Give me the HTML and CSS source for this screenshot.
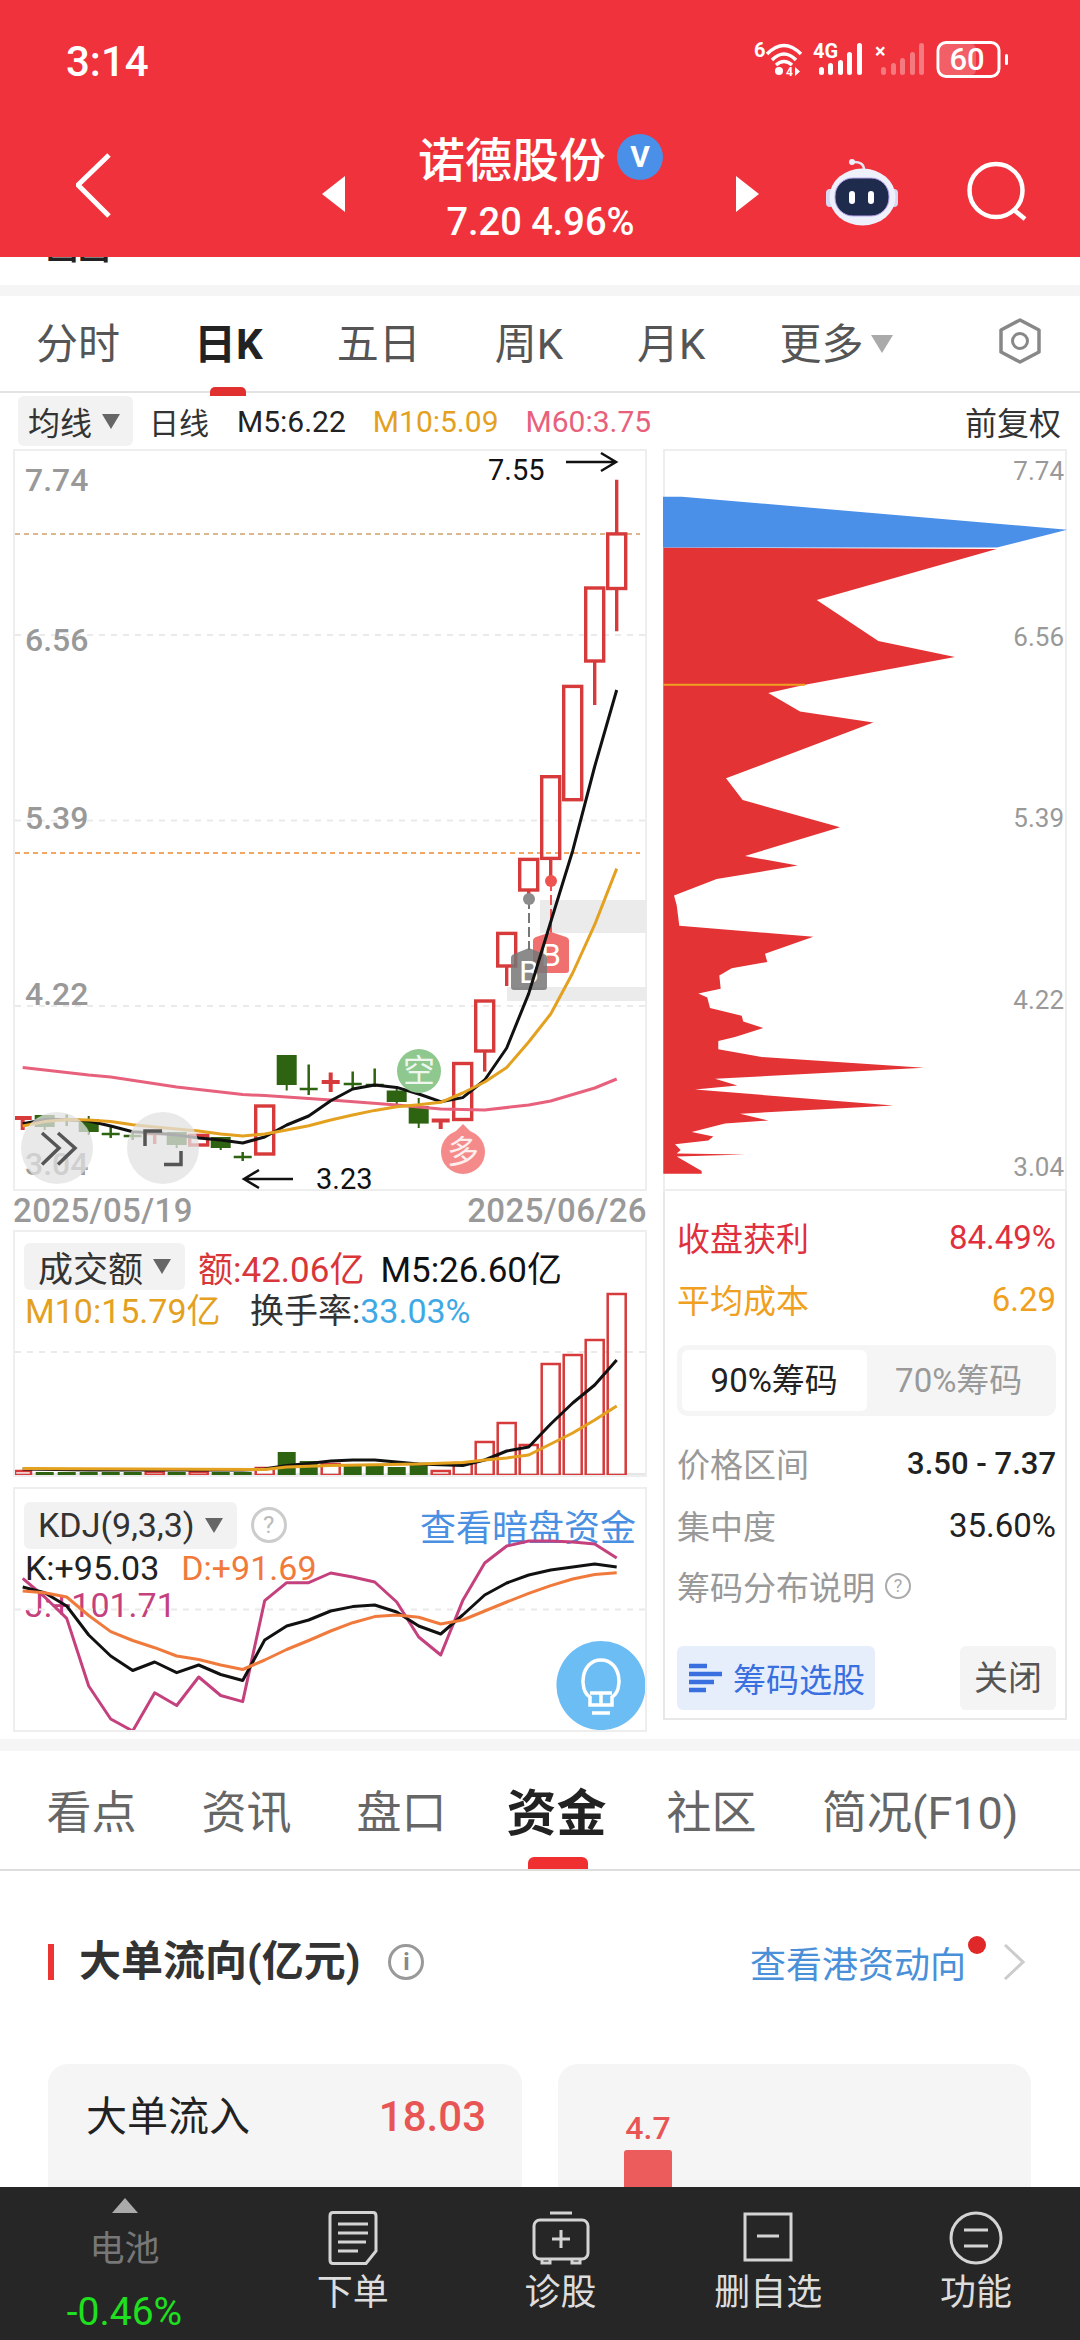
FILE: index.html
```html
<!DOCTYPE html>
<html lang="zh-CN">
<head>
  <meta charset="UTF-8">
  <title>诺德股份</title>
  <link rel="stylesheet" href="styles.css">
</head>
<body>
  <header class="header">
    <div class="status">
      <span class="time">3:14</span>
      <svg class="status-icons" width="262" height="76" viewBox="750 21 262 76">
        <text class="st-small" x="754" y="57">6</text>
        <g class="st-line">
          <path d="M767 54Q784 37 801 54"/>
          <path d="M772 60Q784 48 796 60"/>
          <path d="M776 65Q784 58 792 65"/>
        </g>
        <circle cx="779" cy="71" r="4" fill="#fff"/>
        <text class="st-tiny" x="786" y="76">4</text>
        <path d="M795 67V76L800 71.500Z" fill="#fff"/>
        <text class="st-small" x="813" y="58">4G</text>
        <g fill="#fff">
          <rect x="819" y="67" width="5" height="8" rx="2.500"/>
          <rect x="828" y="63" width="5" height="12" rx="2.500"/>
          <rect x="838" y="60" width="5" height="15" rx="2.500"/>
          <rect x="847" y="52" width="5" height="23" rx="2.500"/>
          <rect x="857" y="43" width="5" height="32" rx="2.500"/>
        </g>
        <text class="st-small" x="875" y="58">×</text>
        <g fill="#fff" opacity="0.35">
          <rect x="881" y="67" width="5" height="8" rx="2.500"/>
          <rect x="891" y="63" width="5" height="12" rx="2.500"/>
          <rect x="900" y="58" width="5" height="17" rx="2.500"/>
          <rect x="910" y="52" width="5" height="23" rx="2.500"/>
          <rect x="919" y="43" width="5" height="32" rx="2.500"/>
        </g>
        <rect x="940" y="44" width="36" height="31" rx="5" fill="#fff" opacity="0.22"/>
        <rect x="938" y="42.500" width="61" height="34" rx="8" fill="none" stroke="#fff" stroke-width="3"/>
        <text class="st-batt" x="967" y="70">60</text>
        <rect x="1005" y="54" width="3" height="11" rx="1.500" fill="#fff"/>
      </svg>
    </div>
    <div class="title-row">
      <svg class="back" width="36" height="66" viewBox="0 0 36 66">
        <path d="M33 2 2 32l31 31" fill="none" stroke="#fff" stroke-width="5"/>
      </svg>
      <span class="tri tri-left"></span>
      <div class="stock">
        <div class="stock-name">诺德股份<span class="badge-v">V</span></div>
        <div class="stock-price">7.20 4.96%</div>
      </div>
      <span class="tri tri-right"></span>
      <svg class="robot" width="72" height="68" viewBox="0 0 72 68">
        <path d="M26 3Q38 2 38 11" fill="none" stroke="#e8e8f4" stroke-width="2.500"/>
        <circle cx="26" cy="3" r="3" fill="#eef0fb"/>
        <rect x="0" y="30" width="8" height="18" rx="4" fill="#d5daf2"/>
        <rect x="64" y="30" width="8" height="18" rx="4" fill="#d5daf2"/>
        <ellipse cx="36.500" cy="38" rx="33" ry="28.500" fill="#eef0fb"/>
        <rect x="9" y="19" width="54" height="38" rx="18" fill="#1f2b4d" stroke="#b9a6ee" stroke-width="1"/>
        <rect x="23" y="32" width="6" height="13" rx="3" fill="#fff"/>
        <rect x="42" y="32" width="6" height="13" rx="3" fill="#fff"/>
      </svg>
      <svg class="search" width="62" height="60" viewBox="0 0 62 60">
        <circle cx="30" cy="29.500" r="26.500" fill="none" stroke="#fff" stroke-width="4.500"/>
        <path d="M48 49 59 58" stroke="#fff" stroke-width="4.500"/>
      </svg>
    </div>
  </header>

  <main class="content">
    <div class="sliver"><span>画画</span></div>

    <section class="kline">
      <nav class="period-tabs">
        <span>分时</span>
        <span class="active">日K</span>
        <span>五日</span>
        <span>周K</span>
        <span>月K</span>
        <span>更多<i class="caret caret-lg"></i></span>
        <svg class="hex" width="48" height="46" viewBox="0 0 48 46">
          <path d="M24 2 43 12V34L24 44 5 34V12Z" fill="none" stroke="#888" stroke-width="3.500" stroke-linejoin="round"/>
          <circle cx="24" cy="23" r="7.500" fill="none" stroke="#888" stroke-width="3"/>
        </svg>
      </nav>

      <div class="ma-row">
        <span class="chip">均线<i class="caret"></i></span>
        <span class="ma-name">日线</span>
        <span class="ma-val">M5:6.22</span>
        <span class="ma-val c-orange">M10:5.09</span>
        <span class="ma-val c-pink">M60:3.75</span>
        <span class="ma-right">前复权</span>
      </div>

      <div class="chart-grid">
        <div class="col">
          <div class="panel panel-main">
            <svg class="chart chart-open" width="630" height="738" viewBox="15 451 630 738">
              <rect class="band" x="540" y="900" width="107" height="33"/>
              <rect class="band" x="507" y="987" width="140" height="14"/>
              <path class="grid" d="M15 635H645M15 820.600H645M15 1006H645"/>
              <path class="dash-tan" d="M15 534H640"/>
              <path class="dash-orange" d="M15 853H640"/>

              <text class="axis" x="25" y="491">7.74</text>
              <text class="axis" x="25" y="651">6.56</text>
              <text class="axis" x="25" y="829">5.39</text>
              <text class="axis" x="25" y="1005">4.22</text>
              <text class="axis" x="25" y="1175">3.04</text>

              <g class="up">
                <rect x="607.700" y="533.900" width="18" height="54.600"/>
                <path d="M616.700 479.800V533.900M616.700 588.500V631.300"/>
                <rect x="585.700" y="588" width="18" height="73"/>
                <path d="M594.700 661V705"/>
                <rect x="563.700" y="686.400" width="18" height="113.300"/>
                <rect x="541.700" y="776.700" width="18" height="81.700"/>
                <path d="M550.700 858.400V881"/>
                <rect x="519.700" y="859.400" width="18" height="30.600"/>
                <path d="M528.700 890V899"/>
                <rect x="497.700" y="933.400" width="18" height="32.600"/>
                <path d="M506.700 966V986"/>
                <rect x="475.700" y="1001" width="18" height="50"/>
                <path d="M484.700 1051V1071.600"/>
                <rect x="453.700" y="1063.500" width="18" height="56"/>
                <rect x="255.700" y="1106" width="18" height="48"/>
                <rect x="189.700" y="1135.400" width="18" height="9.600"/>
                <path d="M431.700 1120.500H449.700M440.700 1120V1129" stroke-width="4"/>
                <path d="M321.700 1082H339.700M330.700 1072.600V1092" stroke-width="4"/>
                <path d="M145.700 1133.500H163.700M154.700 1131V1144"/>
                <path d="M15 1118H31.700M22.700 1118V1130" stroke-width="4"/>
              </g>
              <g class="dn">
                <path d="M418.700 1098V1128M396.700 1086V1106M286.700 1056V1090.500M220.700 1138V1150M176.700 1133V1148M88.700 1116V1135M44.700 1116V1130"/>
                <rect x="409.700" y="1107" width="18" height="15.600"/>
                <rect x="387.700" y="1091.500" width="18" height="9.500"/>
                <rect x="277.700" y="1056" width="18" height="28"/>
                <rect x="211.700" y="1138" width="18" height="9"/>
                <rect x="167.700" y="1133" width="18" height="11"/>
                <rect x="79.700" y="1120" width="18" height="11"/>
                <rect x="35.700" y="1116" width="18" height="10"/>
              </g>
              <path class="dn-thin" d="M365.700 1085H383.700M374.700 1068.600V1087M343.700 1084H361.700M352.700 1071.600V1089M299.700 1089H317.700M308.700 1064.500V1095M233.700 1157H251.700M242.700 1152V1161M123.700 1136H141.700M132.700 1132V1140M101.700 1134H119.700M110.700 1126V1138M57.700 1120H75.700M66.700 1114.500V1126"/>

              <path class="tag-line-gray" d="M529 899V950"/>
              <path class="tag-line-red" d="M551 881V934"/>
              <circle cx="529" cy="899" r="6" fill="#8c8c8c"/>
              <circle cx="551" cy="881" r="6" fill="#ef5350"/>
              <path class="tag-red" d="M536 937 551 932 566 937Q569 938 569 941V970Q569 973 566 973H536Q533 973 533 970V941Q533 938 536 937Z"/>
              <text class="tag-text" x="551" y="966">B</text>
              <path class="tag-gray" d="M514 954 529 948 544 954Q547 955 547 958V987Q547 990 544 990H514Q511 990 511 987V958Q511 955 514 954Z"/>
              <text class="tag-text" x="529" y="983">B</text>

              <polyline class="ln-pink" points="22.700,1067.500 88.700,1075 110.700,1077 176.700,1087 242.700,1094.600 264.700,1095.600 330.700,1100 396.700,1105 440.700,1109 484.700,1110 528.700,1105 550.700,1101 594.700,1088 616.700,1079"/>
              <polyline class="ln-black" points="22.700,1123.700 44.700,1119.600 66.700,1119.600 88.700,1121 110.700,1126 132.700,1131.800 154.700,1132.900 176.700,1134.900 198.700,1138 220.700,1140 242.700,1143 264.700,1137 286.700,1125 308.700,1116 330.700,1100.700 352.700,1089 374.700,1085 396.700,1087.400 418.700,1094 440.700,1101.700 462.700,1097.600 484.700,1080 506.700,1048 528.700,993.600 550.700,922 572.700,850.700 594.700,766.500 616.700,690"/>
              <polyline class="ln-orange" points="22.700,1126 44.700,1121.600 66.700,1119.600 88.700,1120 110.700,1121.600 132.700,1124.700 154.700,1127 176.700,1129 198.700,1131 220.700,1134 242.700,1136 264.700,1134 286.700,1130 308.700,1125.700 330.700,1120 352.700,1115 374.700,1110.400 396.700,1106.800 418.700,1104.800 440.700,1102.300 462.700,1093 484.700,1082 506.700,1067.500 528.700,1042 550.700,1014 572.700,973 594.700,924.700 616.700,868.600"/>

              <circle cx="419" cy="1071" r="22" fill="#8ec88e"/>
              <text class="mark-text" x="419" y="1082">空</text>
              <circle cx="463" cy="1152" r="22" fill="#f48a8a"/>
              <path d="M455 1132 463 1124 471 1132Z" fill="#f48a8a"/>
              <text class="mark-text" x="463" y="1163">多</text>

              <text class="note" x="488" y="480">7.55</text>
              <path class="arrow" d="M566 462H616M601 453 616 462 601 471"/>
              <text class="note" x="316" y="1189">3.23</text>
              <path class="arrow" d="M293 1179H244M259 1170 244 1179 259 1188"/>

              <circle class="float-btn" cx="57" cy="1148" r="36"/>
              <circle class="float-btn" cx="163" cy="1148" r="36"/>
              <path class="float-icon" d="M42 1133 59 1148 42 1164.500M58 1133 75 1148 58 1164.500"/>
              <path class="float-icon" d="M145 1146V1131H162M181 1151V1164.500H164"/>
            </svg>
          </div>

          <div class="dates"><span>2025/05/19</span><span>2025/06/26</span></div>

          <div class="panel panel-vol">
            <div class="panel-head">
              <span class="chip chip-lg">成交额<i class="caret"></i></span>
              <span class="c-red vol-a">额:42.06亿</span>
              <span class="vol-b">M5:26.60亿</span>
            </div>
            <div class="panel-line">
              <span class="c-orange">M10:15.79亿</span>
              <span class="turn">换手率:<span class="c-sky">33.03%</span></span>
            </div>
            <svg class="chart" width="630" height="243" viewBox="15 1232 630 243">
              <path class="grid" d="M15 1352H645"/>
              <path class="base" d="M15 1474H645"/>
              <g class="bar-up">
                <rect x="607.700" y="1294" width="18" height="181"/>
                <rect x="585.700" y="1340" width="18" height="135"/>
                <rect x="563.700" y="1355" width="18" height="120"/>
                <rect x="541.700" y="1364" width="18" height="111"/>
                <rect x="519.700" y="1445" width="18" height="30"/>
                <rect x="497.700" y="1423" width="18" height="52"/>
                <rect x="475.700" y="1442" width="18" height="33"/>
                <rect x="453.700" y="1463" width="18" height="12"/>
                <rect x="431.700" y="1471" width="18" height="4"/>
                <rect x="321.700" y="1464" width="18" height="11"/>
                <rect x="255.700" y="1468" width="18" height="7"/>
                <rect x="189.700" y="1472" width="18" height="3"/>
                <rect x="145.700" y="1472" width="18" height="3"/>
                <rect x="15" y="1471" width="16" height="4"/>
              </g>
              <g class="bar-dn">
                <rect x="409.700" y="1465" width="18" height="10"/>
                <rect x="387.700" y="1467" width="18" height="8"/>
                <rect x="365.700" y="1465.600" width="18" height="9.400"/>
                <rect x="343.700" y="1465.600" width="18" height="9.400"/>
                <rect x="299.700" y="1461" width="18" height="14"/>
                <rect x="277.700" y="1452" width="18" height="23"/>
                <rect x="233.700" y="1472" width="18" height="3"/>
                <rect x="211.700" y="1472" width="18" height="3"/>
                <rect x="167.700" y="1472" width="18" height="3"/>
                <rect x="123.700" y="1472" width="18" height="3"/>
                <rect x="101.700" y="1472" width="18" height="3"/>
                <rect x="79.700" y="1472" width="18" height="3"/>
                <rect x="57.700" y="1472" width="18" height="3"/>
                <rect x="35.700" y="1472" width="18" height="3"/>
              </g>
              <polyline class="ln-black" points="22.700,1469 88.700,1470 176.700,1470 242.700,1470 264.700,1469 286.700,1465.600 308.700,1463.500 330.700,1461 352.700,1460 374.700,1460 396.700,1462 418.700,1464 462.700,1465.600 484.700,1460 506.700,1451 528.700,1447 550.700,1424 572.700,1403 594.700,1385 616.700,1360"/>
              <polyline class="ln-orange" points="22.700,1468.500 264.700,1469.500 286.700,1467 330.700,1465.600 418.700,1464 462.700,1462.400 484.700,1460 506.700,1458 528.700,1455 550.700,1444 572.700,1433 594.700,1420 616.700,1406"/>
            </svg>
          </div>

          <div class="panel panel-kdj">
            <div class="panel-head">
              <span class="chip chip-lg">KDJ(9,3,3)<i class="caret"></i></span>
              <span class="help help-lg">?</span>
              <span class="kdj-link">查看暗盘资金</span>
            </div>
            <div class="kdj-line kdj-line-k"><span>K:+95.03</span><span class="c-coral">D:+91.69</span></div>
            <div class="kdj-line kdj-line-j">J:+101.71</div>
            <svg class="chart" width="630" height="241" viewBox="15 1489 630 241">
              <path class="grid" d="M15 1609.500H645"/>
              <polyline class="ln-magenta" points="22.700,1578.400 44.700,1597 66.700,1618.400 88.700,1686 110.700,1719 132.700,1731 154.700,1692.700 176.700,1705.500 198.700,1677 220.700,1695.500 242.700,1701.600 264.700,1600.600 286.700,1582.700 308.700,1582.700 330.700,1573 352.700,1577 374.700,1582 396.700,1602 418.700,1637 440.700,1655 462.700,1600.600 484.700,1563 506.700,1546 528.700,1541 550.700,1541 572.700,1542 594.700,1544 616.700,1558"/>
              <polyline class="ln-black" points="22.700,1587 44.700,1592.700 66.700,1606 88.700,1635 110.700,1656 132.700,1670.500 154.700,1662 176.700,1672.700 198.700,1665 220.700,1674.500 242.700,1680.500 264.700,1640 286.700,1626 308.700,1620 330.700,1611 352.700,1606.600 374.700,1605 396.700,1612 418.700,1626 440.700,1634 462.700,1615 484.700,1595 506.700,1583 528.700,1575 550.700,1570 572.700,1567 594.700,1564 616.700,1567"/>
              <polyline class="ln-coral" points="22.700,1591 44.700,1592.700 66.700,1597 88.700,1615.500 110.700,1631.600 132.700,1640.500 154.700,1647.700 176.700,1656 198.700,1659.500 220.700,1665 242.700,1669.500 264.700,1660 286.700,1649.500 308.700,1640.500 330.700,1631 352.700,1622.700 374.700,1616.600 396.700,1615 418.700,1617.300 440.700,1624 462.700,1620 484.700,1611 506.700,1602 528.700,1593.400 550.700,1585.600 572.700,1579 594.700,1574.500 616.700,1572.700"/>
              <circle cx="601" cy="1685.500" r="44.600" fill="#6dbdf5"/>
              <path class="bulb" d="M590 1705V1697C578 1690 581 1660 601 1660C621 1660 624 1690 612 1697V1705ZM590 1693H612M601 1693V1705M592 1713H610"/>
            </svg>
          </div>
        </div>

        <div class="col">
          <div class="panel panel-main">
            <svg class="chart chart-open" width="400" height="738" viewBox="665 451 400 738">
              <polygon class="chip-red" points="663.300,547.600 996.700,549 816.700,600 878.300,641 955,657 805,684.800 768.300,693 800,711.400 873.300,722.600 726,778.300 742.700,800 840,827.300 745,855.900 797.700,865.600 716.700,879 674,895.600 676.700,905.300 679.300,925.700 813.300,936.800 765,953.800 767.300,962 731.700,968.300 719.300,975.600 720.700,988.700 698.300,993.500 707.300,997.400 710,1008 741.700,1015.800 743.300,1021.600 763.300,1028 735,1037 718.300,1041 718.300,1049.300 761.700,1057 924,1067.700 715,1078.800 737.300,1085.600 695,1089.500 893.300,1105.500 740,1113.700 768.300,1120.500 725,1123.400 691.700,1132 713.300,1136.500 708.300,1140.400 675,1144.300 680.700,1150 676.700,1153.500 745,1154.400 676.700,1156.400 701.700,1171 701.700,1173.800 663.300,1173.800"/>
              <polygon class="chip-blue" points="663,496.700 682,496.700 1067,529.700 997,547.600 663,547.600"/>
              <path class="avg-line" d="M663 684.800H805"/>
              <text class="axis-r" x="1064" y="480">7.74</text>
              <text class="axis-r" x="1064" y="646">6.56</text>
              <text class="axis-r" x="1064" y="827">5.39</text>
              <text class="axis-r" x="1064" y="1009">4.22</text>
              <text class="axis-r" x="1064" y="1176">3.04</text>
            </svg>
          </div>

          <div class="stats">
            <div class="stat c-rose"><span>收盘获利</span><span>84.49%</span></div>
            <div class="stat c-amber"><span>平均成本</span><span>6.29</span></div>
            <div class="seg">
              <span class="seg-on">90%筹码</span>
              <span class="seg-off">70%筹码</span>
            </div>
            <div class="stat stat-first"><span class="muted">价格区间</span><span class="strong">3.50 - 7.37</span></div>
            <div class="stat"><span class="muted">集中度</span><span>35.60%</span></div>
            <div class="stat stat-left"><span class="muted">筹码分布说明</span><span class="help">?</span></div>
            <div class="stat-btns">
              <span class="btn-pick">
                <svg width="34" height="30" viewBox="0 0 34 30"><path d="M0 3H18M0 11H33M0 19H25M0 27H17" stroke="#3a6fe0" stroke-width="4.500"/></svg>
                筹码选股
              </span>
              <span class="btn-close">关闭</span>
            </div>
          </div>
        </div>
      </div>
    </section>

    <section class="detail">
      <nav class="detail-tabs">
        <span>看点</span>
        <span>资讯</span>
        <span>盘口</span>
        <span class="active">资金</span>
        <span>社区</span>
        <span class="tab-last">简况(F10)</span>
      </nav>
      <div class="flow-head">
        <h3 class="flow-title">大单流向(亿元)</h3>
        <span class="info">i</span>
        <a class="flow-link">查看港资动向<i class="red-dot"></i></a>
        <svg class="chev" width="22" height="36" viewBox="0 0 22 36"><path d="M2 1 20 18 2 35" fill="none" stroke="#ccc" stroke-width="3"/></svg>
      </div>
      <div class="flow-cards">
        <div class="flow-card flow-card-row"><span>大单流入</span><span class="flow-num">18.03</span></div>
        <div class="flow-card">
          <div class="bar-col"><span class="bar-num">4.7</span><div class="bar-red"></div></div>
        </div>
      </div>
    </section>
  </main>

  <footer class="bottom">
    <div class="bottom-item bottom-first">
      <i class="bottom-tri"></i>
      <span class="bottom-name">电池</span>
      <span class="bottom-pct">-0.46%</span>
    </div>
    <div class="bottom-item">
      <svg class="ico" width="50" height="54" viewBox="0 0 50 54">
        <path d="M5 1.500H45Q48 1.500 48 5V40L38 52.500H5Q2 52.500 2 49V5Q2 1.500 5 1.500Z"/>
        <path d="M10 13H40M10 22H40M10 31H38M10 40H30"/>
      </svg>
      <span>下单</span>
    </div>
    <div class="bottom-item">
      <svg class="ico" width="58" height="54" viewBox="0 0 58 54">
        <path d="M18 2H40"/>
        <rect x="2" y="9" width="54" height="39" rx="6"/>
        <path d="M29 19V37M20 28H38M10 48V52H18V48M40 48V52H48V48"/>
      </svg>
      <span>诊股</span>
    </div>
    <div class="bottom-item">
      <svg class="ico" width="50" height="54" viewBox="0 0 50 54">
        <rect x="2" y="3" width="46" height="46"/>
        <path d="M14 25H36"/>
      </svg>
      <span>删自选</span>
    </div>
    <div class="bottom-item">
      <svg class="ico" width="54" height="54" viewBox="0 0 54 54">
        <circle cx="27" cy="27" r="25"/>
        <path d="M15 19H39M15 35H39"/>
      </svg>
      <span>功能</span>
    </div>
  </footer>
</body>
</html>
```

FILE: styles.css
```css
* {
  box-sizing: border-box;
}
html, body {
  margin: 0;
  padding: 0;
}
body {
  width: 1080px;
  height: 2340px;
  display: flex;
  flex-direction: column;
  overflow: hidden;
  background: #fff;
  color: #222;
  font-family: Roboto, "Noto Sans CJK SC", sans-serif;
}
i {
  font-style: normal;
}

/* colours used by several texts */
.c-orange { color: #e3a11f; }
.c-pink { color: #e8617c; }
.c-red { color: #d9363a; }
.c-sky { color: #3fa9e6; }
.c-coral { color: #f07a3c; }
.c-rose { color: #e0303e; }
.c-amber { color: #f0a020; }

/* red header */
.header {
  height: 257px;
  flex: none;
  background: #f0323c;
  color: #fff;
}
.status {
  height: 122px;
  padding: 0 68px 0 66px;
  display: flex;
  align-items: center;
  justify-content: space-between;
}
.status-icons {
  margin-top: -4px;
}
.time {
  font-size: 42px;
  font-weight: 500;
}
.st-small {
  font-size: 20px;
  font-weight: 700;
  fill: #fff;
}
.st-tiny {
  font-size: 12px;
  font-weight: 700;
  fill: #fff;
}
.st-batt {
  font-size: 31px;
  font-weight: 500;
  fill: #fff;
  text-anchor: middle;
}
.st-line path {
  fill: none;
  stroke: #fff;
  stroke-width: 3.500;
}
.title-row {
  height: 135px;
  padding-left: 76px;
  display: flex;
  align-items: center;
}
.back {
  margin-right: 210px;
  margin-top: -8px;
}
.tri {
  width: 0;
  height: 0;
  border-top: 18px solid transparent;
  border-bottom: 18px solid transparent;
  margin-top: 8px;
}
.tri-left {
  border-right: 23px solid #fff;
}
.tri-right {
  border-left: 23px solid #fff;
}
.stock {
  width: 391px;
  margin-bottom: 6px;
  text-align: center;
}
.stock-name {
  display: flex;
  align-items: center;
  justify-content: center;
  gap: 11px;
  height: 60px;
  margin-bottom: 10px;
  font-size: 47px;
  font-weight: 500;
}
.badge-v {
  width: 46px;
  height: 46px;
  border-radius: 50%;
  background: #4a90e8;
  font-size: 30px;
  font-weight: 700;
  line-height: 46px;
}
.stock-price {
  height: 50px;
  line-height: 50px;
  font-size: 38px;
  font-weight: 500;
}
.robot {
  margin-left: 67px;
  margin-top: 6px;
}
.search {
  margin-left: 68px;
  margin-top: 2px;
}

/* scrolling area */
.content {
  flex: 1;
  min-height: 0;
  overflow: hidden;
}
.sliver {
  height: 39px;
  border-bottom: 11px solid #f5f5f5;
  padding-left: 46px;
  overflow: hidden;
}
.sliver span {
  display: block;
  margin-top: -30px;
  height: 42px;
  line-height: 42px;
  font-size: 32px;
  font-weight: 700;
}

.kline {
  padding-bottom: 7px;
  border-bottom: 12px solid #f5f5f5;
}
.period-tabs {
  height: 97px;
  padding: 0 36px 6px 36px;
  border-bottom: 2px solid #e2e2e2;
  display: flex;
  align-items: center;
  gap: 74px;
  font-size: 42px;
  color: #555;
}
.period-tabs span {
  position: relative;
  white-space: nowrap;
}
.period-tabs .active {
  font-weight: 700;
  color: #222;
}
.period-tabs .active::after {
  content: "";
  position: absolute;
  left: 16px;
  bottom: -25px;
  width: 36px;
  height: 9px;
  border-radius: 5px 5px 0 0;
  background: #e03030;
}
.hex {
  margin-left: auto;
  flex: none;
}
.caret {
  display: inline-block;
  width: 0;
  height: 0;
  margin-left: 10px;
  border-left: 9px solid transparent;
  border-right: 9px solid transparent;
  border-top: 15px solid #666;
  vertical-align: 4px;
}
.caret-lg {
  margin-left: 8px;
  border-left-width: 11px;
  border-right-width: 11px;
  border-top: 18px solid #aaa;
  vertical-align: 6px;
}

.ma-row {
  height: 56px;
  padding: 3px 19px 3px 18px;
  display: flex;
  align-items: center;
  font-size: 30px;
}
.chip {
  display: inline-flex;
  align-items: center;
  height: 50px;
  padding: 0 13px 0 10px;
  background: #f2f2f2;
  border-radius: 6px;
  color: #333;
  font-size: 32px;
  white-space: nowrap;
}
.ma-name {
  margin-left: 16px;
  color: #333;
}
.ma-val {
  margin-left: 27px;
}
.ma-name + .ma-val {
  margin-left: 28px;
}
.ma-right {
  margin-left: auto;
  font-size: 32px;
  color: #333;
}

.chart-grid {
  padding-left: 13px;
  display: grid;
  grid-template-columns: 634px 404px;
  column-gap: 16px;
}
.panel {
  position: relative;
  border: 2px solid #eee;
}
.panel-main {
  height: 742px;
}
.chart {
  position: absolute;
  left: 0;
  top: 0;
  display: block;
}
.chart-open {
  overflow: visible;
}
.axis {
  font-size: 32px;
  font-weight: 500;
  fill: #999;
}
.axis-r {
  font-size: 26px;
  fill: #999;
  text-anchor: end;
}
.note {
  font-size: 29px;
  fill: #111;
}
.band {
  fill: #ebebeb;
}
.grid {
  fill: none;
  stroke: #eaeaea;
  stroke-width: 2;
  stroke-dasharray: 6 6;
}
.base {
  fill: none;
  stroke: #e6e6e6;
  stroke-width: 2;
}
.dash-tan {
  fill: none;
  stroke: #cfa06c;
  stroke-width: 1.500;
  stroke-dasharray: 5 4;
}
.dash-orange {
  fill: none;
  stroke: #ee8a2d;
  stroke-width: 1.500;
  stroke-dasharray: 5 4;
}
.up {
  fill: none;
  stroke: #d63a3a;
  stroke-width: 3.400;
}
.dn {
  fill: #2e6312;
  stroke: #2e6312;
  stroke-width: 2;
}
.dn-thin {
  fill: none;
  stroke: #2e6312;
  stroke-width: 2.500;
}
.ln-black,
.ln-orange,
.ln-pink,
.ln-magenta,
.ln-coral {
  fill: none;
  stroke-width: 3;
  stroke-linejoin: round;
}
.ln-black { stroke: #111; }
.ln-orange { stroke: #e3a11f; }
.ln-pink { stroke: #e8617c; }
.ln-magenta { stroke: #c4417e; }
.ln-coral { stroke: #f07a3c; }
.tag-line-gray {
  stroke: #777;
  stroke-width: 2;
  stroke-dasharray: 10 4;
}
.tag-line-red {
  stroke: #ef5350;
  stroke-width: 2;
  stroke-dasharray: 10 4;
}
.tag-red {
  fill: #f07070;
}
.tag-gray {
  fill: #777;
  opacity: 0.85;
}
.tag-text {
  font-size: 32px;
  fill: #fff;
  text-anchor: middle;
}
.mark-text {
  font-size: 32px;
  fill: #fff;
  text-anchor: middle;
  opacity: 0.85;
}
.arrow {
  fill: none;
  stroke: #111;
  stroke-width: 2.500;
}
.float-btn {
  fill: #e2e2e2;
  opacity: 0.75;
}
.float-icon {
  fill: none;
  stroke: #555;
  stroke-width: 3.500;
}
.chip-red {
  fill: #e33334;
}
.chip-blue {
  fill: #4a8fe8;
}
.avg-line {
  stroke: #f0a020;
  stroke-width: 2;
}

.dates {
  height: 39px;
  padding-top: 1px;
  line-height: 38px;
  display: flex;
  justify-content: space-between;
  font-size: 33px;
  font-weight: 500;
  letter-spacing: 0.4px;
  color: #999;
}

.panel-vol {
  height: 247px;
  padding: 9px 0 0 9px;
}
.panel-kdj {
  height: 245px;
  margin-top: 10px;
  padding: 10px 0 0 9px;
}
.panel-head {
  display: flex;
  align-items: center;
  font-size: 34px;
}
.chip-lg {
  height: 47px;
  padding: 0 14px;
  font-size: 34px;
}
.panel-vol .panel-head,
.panel-vol .chip-lg {
  font-size: 35px;
}
.vol-a {
  margin-left: 13px;
}
.vol-b {
  margin-left: 16px;
  color: #111;
}
.panel-line {
  height: 38px;
  line-height: 38px;
  padding-left: 1px;
  font-size: 34px;
}
.turn {
  margin-left: 21px;
  color: #333;
}
.help {
  display: inline-block;
  width: 26px;
  height: 26px;
  margin-left: 10px;
  border: 2px solid #aaa;
  border-radius: 50%;
  color: #aaa;
  font-size: 18px;
  line-height: 22px;
  text-align: center;
}
.help-lg {
  width: 36px;
  height: 36px;
  margin-left: 14px;
  border: 3px solid #ccc;
  color: #bbb;
  font-size: 24px;
  line-height: 30px;
}
.kdj-link {
  margin-left: auto;
  margin-right: 9px;
  font-size: 36px;
  color: #4a90e2;
}
.kdj-line {
  padding-left: 1px;
  font-size: 34px;
}
.kdj-line-k {
  height: 35px;
  line-height: 35px;
  color: #222;
}
.kdj-line-j {
  height: 39px;
  line-height: 39px;
  color: #c4417e;
}
.kdj-line span + span {
  margin-left: 22px;
}
.bulb {
  fill: none;
  stroke: #fff;
  stroke-width: 3.500;
}
.bar-up rect {
  fill: none;
  stroke: #d63a3a;
  stroke-width: 2.500;
}
.bar-dn rect {
  fill: #2e6312;
}

.stats {
  height: 529px;
  padding: 15px 9px 0 12px;
  border: 2px solid #e8e8e8;
  border-top: 0;
  font-size: 33px;
}
.stat {
  height: 62px;
  display: flex;
  align-items: center;
  justify-content: space-between;
}
.stat-first {
  margin-top: 16px;
}
.stat-left {
  margin-top: -1px;
  justify-content: flex-start;
}
.muted {
  color: #999;
}
.strong {
  font-size: 31px;
  font-weight: 500;
}
.seg {
  height: 71px;
  margin-top: 15px;
  padding: 5px;
  display: flex;
  background: #f5f5f5;
  border-radius: 10px;
}
.seg span {
  flex: 1;
  line-height: 61px;
  text-align: center;
}
.seg-on {
  background: #fff;
  border-radius: 6px;
}
.seg-off {
  color: #999;
}
.stat-btns {
  margin-top: 29px;
  display: flex;
  justify-content: space-between;
}
.btn-pick {
  width: 198px;
  height: 64px;
  padding-left: 12px;
  display: flex;
  align-items: center;
  gap: 10px;
  background: #e6eefc;
  border-radius: 6px;
  color: #3a6fe0;
  white-space: nowrap;
}
.btn-close {
  width: 96px;
  height: 64px;
  line-height: 64px;
  text-align: center;
  background: #f4f4f4;
  border-radius: 6px;
  font-size: 34px;
  color: #555;
}

/* lower tabs and money flow */
.detail-tabs {
  height: 120px;
  padding: 0 0 2px 14px;
  border-bottom: 2px solid #ddd;
  display: flex;
  align-items: center;
  font-size: 45px;
  color: #666;
}
.detail-tabs span {
  position: relative;
  width: 155px;
  text-align: center;
  white-space: nowrap;
}
.detail-tabs .tab-last {
  width: auto;
  margin-left: 33px;
}
.detail-tabs .active {
  font-size: 50px;
  font-weight: 700;
  color: #222;
}
.detail-tabs .active::after {
  content: "";
  position: absolute;
  left: 49px;
  bottom: -24px;
  width: 60px;
  height: 12px;
  border-radius: 6px 6px 0 0;
  background: #f03030;
}
.flow-head {
  height: 182px;
  padding: 0 55px 0 48px;
  display: flex;
  align-items: center;
}
.flow-title {
  margin: 0;
  padding-left: 25px;
  border-left: 6px solid #e33;
  height: 36px;
  line-height: 36px;
  font-size: 42px;
  font-weight: 700;
  color: #333;
  white-space: nowrap;
}
.info {
  width: 36px;
  height: 36px;
  margin-left: 28px;
  border: 3px solid #999;
  border-radius: 50%;
  color: #888;
  font-size: 24px;
  font-weight: 700;
  line-height: 30px;
  text-align: center;
}
.flow-link {
  position: relative;
  margin-left: auto;
  font-size: 36px;
  color: #4a90d9;
}
.red-dot {
  position: absolute;
  right: -20px;
  top: 0;
  width: 18px;
  height: 18px;
  border-radius: 50%;
  background: #e02828;
}
.chev {
  margin-left: 37px;
}
.flow-cards {
  padding: 11px 49px 0 48px;
  display: grid;
  grid-template-columns: 474px 473px;
  column-gap: 36px;
}
.flow-card {
  height: 300px;
  background: #f5f5f5;
  border-radius: 20px;
}
.flow-card-row {
  padding: 30px 36px 0 38px;
  display: flex;
  justify-content: space-between;
  font-size: 41px;
  line-height: 46px;
  color: #222;
}
.flow-num {
  font-size: 42px;
  font-weight: 500;
  color: #e85555;
}
.bar-col {
  width: 48px;
  margin-left: 66px;
  padding-top: 46px;
  text-align: center;
}
.bar-num {
  display: block;
  height: 40px;
  line-height: 36px;
  font-size: 32px;
  font-weight: 500;
  color: #e85555;
}
.bar-red {
  height: 120px;
  background: #ec5c5c;
  border-radius: 3px 3px 0 0;
}

/* dark bottom bar */
.bottom {
  height: 153px;
  flex: none;
  display: grid;
  grid-template-columns: 249px repeat(4, 1fr);
  background: #262626;
  color: #ddd;
  font-size: 36px;
}
.bottom-item {
  padding-top: 24px;
  display: flex;
  flex-direction: column;
  align-items: center;
}
.bottom-item > span {
  line-height: 44px;
  margin-top: 6px;
}
.ico {
  fill: none;
  stroke: #d4d4d4;
  stroke-width: 3;
}
.bottom-first {
  padding-top: 11px;
}
.bottom-tri {
  width: 0;
  height: 0;
  border-left: 13px solid transparent;
  border-right: 13px solid transparent;
  border-bottom: 15px solid #aaa;
}
.bottom-item .bottom-name {
  margin-top: 15px;
  height: 44px;
  font-size: 35px;
  color: #777;
}
.bottom-item .bottom-pct {
  margin-top: 22px;
  line-height: 36px;
  font-size: 39px;
  color: #1fe01f;
}
```
